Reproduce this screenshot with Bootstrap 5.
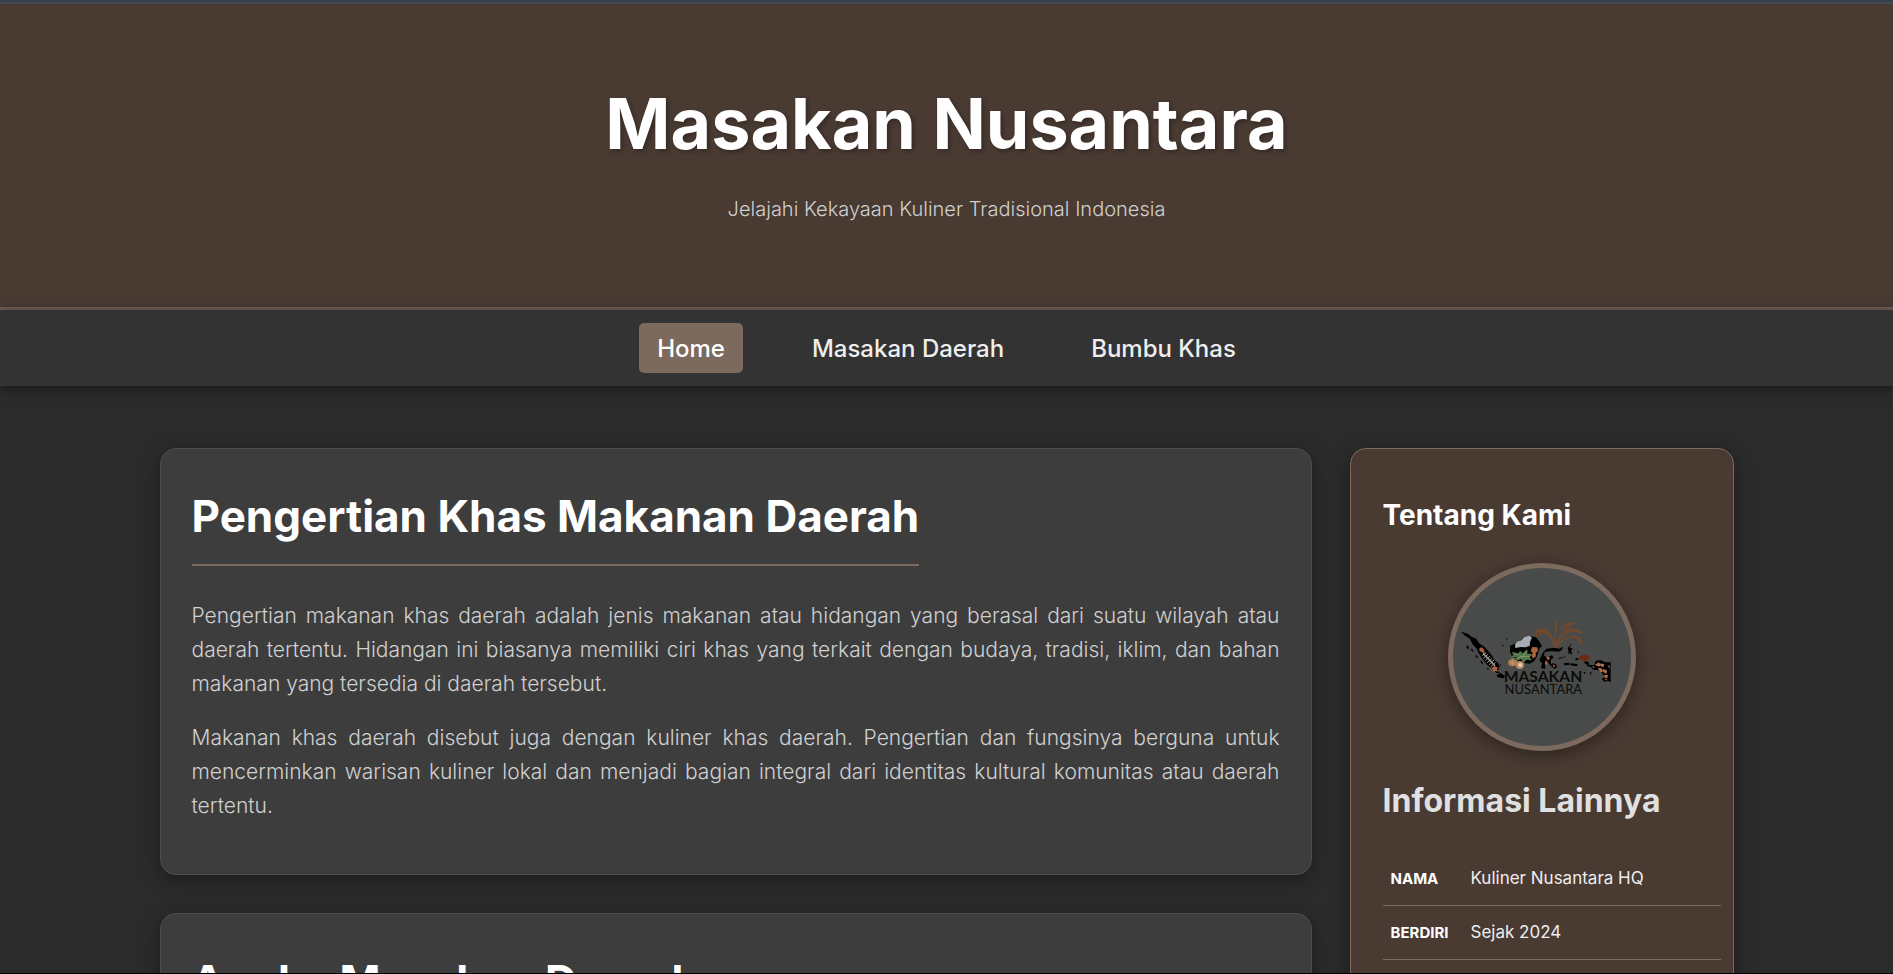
<!DOCTYPE html>
<html lang="id">
<head>
<meta charset="utf-8">
<meta name="viewport" content="width=device-width, initial-scale=1">
<title>Masakan Nusantara</title>
<link href="https://cdn.jsdelivr.net/npm/bootstrap@5.3.0/dist/css/bootstrap.min.css" rel="stylesheet">
<style>
  :root { --coklat: #493a32; --tembaga: #7b6a5d; --arang: #2b2b2b; }
  html { scrollbar-width: none; }
  body { font-family: Inter, "Liberation Sans", sans-serif; background: var(--arang); color: #e0e0e0; }
  h1, h2, h3 { font-weight: 700; line-height: 1.2; }
  .top-strip { height: 4px; background: #364051; border-bottom: 2px solid #474950; }
  .site-header { background: var(--coklat); border-bottom: 3px solid #6e5f54; padding: 78px 16px 82px; }
  .site-header h1 { font-size: 70px; color: #fff; text-shadow: 2px 2px 4px rgba(0,0,0,.3); margin-bottom: 27px; }
  .site-header p { font-size: 20px; line-height: 32px; font-weight: 300; color: #d0d0d0; }
  .site-nav { background: #333; padding: 13px 16px; box-shadow: 0 2px 10px rgba(0,0,0,.5); position: relative; }
  .site-nav .nav { column-gap: 51px; }
  .site-nav .nav-link { font-size: 24px; line-height: 38px; font-weight: 500; color: #eee; padding: 7px 18px 5px; border-radius: 5px; }
  .site-nav .nav-link.active { background: var(--tembaga); color: #fff; }
  .page-grid { display: grid; grid-template-columns: minmax(0, 3fr) minmax(0, 1fr); gap: 38px; max-width: 1574px; margin: 62px auto 38px; align-items: start; }
  .articles { display: grid; gap: 38px; }
  .panel { border-radius: 16px; border: 1px solid #4d4d4d; background: #3d3d3d; padding: 41px 31px 31px; box-shadow: 0 5px 20px rgba(0,0,0,.35); }
  .panel h2 { display: table; font-size: 44px; color: #fff; padding-bottom: 21px; border-bottom: 2px solid var(--tembaga); margin-bottom: 33px; }
  .panel p { font-size: 21px; line-height: 34px; font-weight: 300; color: #d0d0d0; text-align: justify; margin-bottom: 20px; }
  .about { border-radius: 16px; border: 1px solid var(--tembaga); background: var(--coklat); padding: 50px 32px 32px; box-shadow: 0 5px 20px rgba(0,0,0,.35); }
  .about h3 { font-size: 28px; color: #fff; margin-bottom: 30px; }
  .about h2 { font-size: 32px; margin: 31px 0 32px; }
  .brand-disc { width: 188px; height: 188px; border: 5px solid var(--tembaga); background: #494b4a; box-shadow: 0 4px 16px rgba(0,0,0,.4); }
  .facts { width: calc(100% + 20px); font-size: 17px; line-height: 33px; color: #eee; }
  .facts th, .facts td { padding: 10px 8px; border-bottom: 1px solid var(--tembaga); }
  .facts th { width: 80px; font-size: 15px; color: #fff; }
  .bottom-line { border-bottom: 1px solid #000; }
  @media (max-width: 991px) { .page-grid { grid-template-columns: minmax(0, 1fr); margin: 24px 12px; } }
</style>
</head>
<body>
<div class="top-strip"></div>
<header class="site-header text-center">
  <h1>Masakan Nusantara</h1>
  <p class="mb-0">Jelajahi Kekayaan Kuliner Tradisional Indonesia</p>
</header>
<nav class="site-nav" aria-label="Utama">
  <ul class="nav justify-content-center">
    <li class="nav-item"><a class="nav-link active" aria-current="page" href="#home">Home</a></li>
    <li class="nav-item"><a class="nav-link" href="#aneka">Masakan Daerah</a></li>
    <li class="nav-item"><a class="nav-link" href="#bumbu">Bumbu Khas</a></li>
  </ul>
</nav>
<div class="page-grid">
  <main class="articles">
    <article class="panel" id="home">
      <h2>Pengertian Khas Makanan Daerah</h2>
      <p>Pengertian makanan khas daerah adalah jenis makanan atau hidangan yang berasal dari suatu wilayah atau daerah tertentu. Hidangan ini biasanya memiliki ciri khas yang terkait dengan budaya, tradisi, iklim, dan bahan makanan yang tersedia di daerah tersebut.</p>
      <p>Makanan khas daerah disebut juga dengan kuliner khas daerah. Pengertian dan fungsinya berguna untuk mencerminkan warisan kuliner lokal dan menjadi bagian integral dari identitas kultural komunitas atau daerah tertentu.</p>
    </article>
    <article class="panel" id="aneka">
      <h2>Aneka Masakan Daerah</h2>
    </article>
  </main>
  <aside class="about">
    <h3>Tentang Kami</h3>
    <svg class="brand-disc rounded-circle d-block mx-auto" viewBox="72 54 534 534" role="img" aria-label="Logo Masakan Nusantara">
      <!-- Sumatra -->
      <path d="M96 245 L118 252 128 261 142 266 150 280 166 290 178 303 190 318 196 330 208 340 212 350 206 362 214 370 203 369 190 357 176 346 163 330 151 313 143 296 132 284 122 266 106 256Z"/>
      <path d="M113 286l7 5-2 8-6-8zM126 295l6 4 1 7-6-4zM139 314l6 4 2 7-7-5zM154 331l6 4 3 8-7-4zM174 352l6 6-4 2zM217 286l6-2 1 5zM231 265l5 1-2 5zM203 376l12-7 13 9-5 7-17-3z"/>
      <path d="M150 297l8-6 8 9 1 9-8-2-7-4zM184 351l7 2 5-8 4 6 7 1-3 6 2 7-7-2-7 2-2-7z" fill="#a9613e"/>
      <path d="M162 310 L198 347" stroke="#a9a69d" stroke-width="4"/>
      <path d="M160 317l12-9M163 325l15-13M169 331l15-13M174 338l16-13M180 344l15-14M186 350l13-13" stroke="#a9a69d" stroke-width="3"/>
      <!-- Kalimantan -->
      <path d="M243 288 L262 279 280 267 299 259 321 262 330 273 339 288 332 295 328 307 323 321 315 334 302 341 286 339 270 335 251 322 243 307Z"/>
      <path d="M263 276 277 271 286 262 301 257 309 263 303 275 302 288 289 292 275 291 259 294 258 284Z" fill="#a8adb3"/>
      <path d="M310 291l15 1 2 10-7 8 1 9-9 7-4-9 3-7-6-8z" fill="#a9613e"/>
      <path d="M248 306l19 5 6-9 8 8 13-12 1 13 15 1-8 10 7 9-17-2-8 10-8-12-17 7 6-12-22 1 10-8z" fill="#527746"/>
      <path d="M254 307l17 8M278 323l18-21M272 320l31-1M273 323l-26 4" stroke="#aab78b" stroke-width="1.5"/>
      <ellipse cx="251" cy="338" rx="14" ry="11" fill="#a77850"/><circle cx="273" cy="345" r="12" fill="#bb8a65"/><circle cx="274" cy="345" r="6" fill="#e6d2b8"/>
      <path d="M241 333l20 10M243 343l17-12M250 328v20" stroke="#ceb184" stroke-width="1.5"/>
      <!-- rice plant -->
      <g fill="none" stroke="#74482a" stroke-width="4" stroke-linecap="round">
        <path d="M376 294Q375 258 349 241Q333 233 316 249M377 291Q378 250 381 217M380 291Q392 251 418 232L432 221M382 291Q400 246 436 241L456 246M382 292Q401 261 440 259Q457 265 458 281M374 279Q365 254 342 244"/>
        <path d="M320 247Q335 232 356 248M322 256L343 244M382 241L380 218M399 237Q413 219 431 222M409 248Q430 230 458 249M426 260Q447 256 459 279" stroke-width="7" stroke-dasharray="7 4"/>
      </g>
      <!-- Sulawesi and Maluku -->
      <path d="M344 305l9-9 23-3 15 3 11-6-3 10-11 5-22-2-19 3-2 11 8 5 16-6 5 7-10 7 6 8 11 5 3 9-8 5-9-8-7-7-6-11-6 1 1 24-13-1 3-15-8-10 7-15z"/>
      <path d="M351 323l8-4 4 6-5 6zM347 338l6-3 3 7-7 2zM365 332l7 6-4 5zM371 342l8 5-4 7z" fill="#a9613e"/>
      <path d="M416 296l6-10 2 9 7-1-4 7 2 13-8-5-4 5 2-9zM424 281l4 2-2 5zM404 317l4 1-2 5zM405 340l16-2v7l-15 1zM424 340l22 2-2 7-20-3zM443 303l9 4-4 2zM388 323l15-1v2l-15 2zM439 326l8-3 1 7-9 1zM214 341l3 4-4 2z"/>
      <path d="M450 321l8-6 13 0 11 4-4 11-12 3-13-4z" fill="#6c2b10"/>
      <!-- Papua -->
      <path d="M463 336l12-2 6 7-6 5zM480 344l16 2 4-13 15-3 13 7h17v60l-7-4-11 2-9-7 8-8-6-11-12-8-15-2-8-8-14-3zM463 367l7-2-3 8zM483 366l5-1-4 13z"/>
      <path d="M498 344l11-7 7 7-6 6zM515 340l11 3-3 9-8-3zM506 354l11 1 6 9-9 3zM522 357l12 4-1 10-10-4zM526 374l11 2-2 8-9-1zM535 346l7 2v8zM527 386l8 1-3 5zM490 347l7 5-5 3z" fill="#b16e4e"/>
      <g font-family="Lato, sans-serif" fill="#0b0b0b">
        <text x="342" y="395" text-anchor="middle" font-size="47" font-weight="700">MASAKAN</text>
        <text x="343" y="432" text-anchor="middle" font-size="39">NUSANTARA</text>
      </g>
      <path d="M375 400h8v3h-8zM388 400h7v3h-7z" fill="#79452b"/>
    </svg>
    <h2>Informasi Lainnya</h2>
    <table class="facts">
      <tbody>
        <tr><th scope="row">NAMA</th><td>Kuliner Nusantara HQ</td></tr>
        <tr><th scope="row">BERDIRI</th><td>Sejak 2024</td></tr>
      </tbody>
    </table>
  </aside>
</div>
<div class="fixed-bottom bottom-line"></div>
<script src="https://cdn.jsdelivr.net/npm/bootstrap@5.3.0/dist/js/bootstrap.bundle.min.js"></script>
</body>
</html>
